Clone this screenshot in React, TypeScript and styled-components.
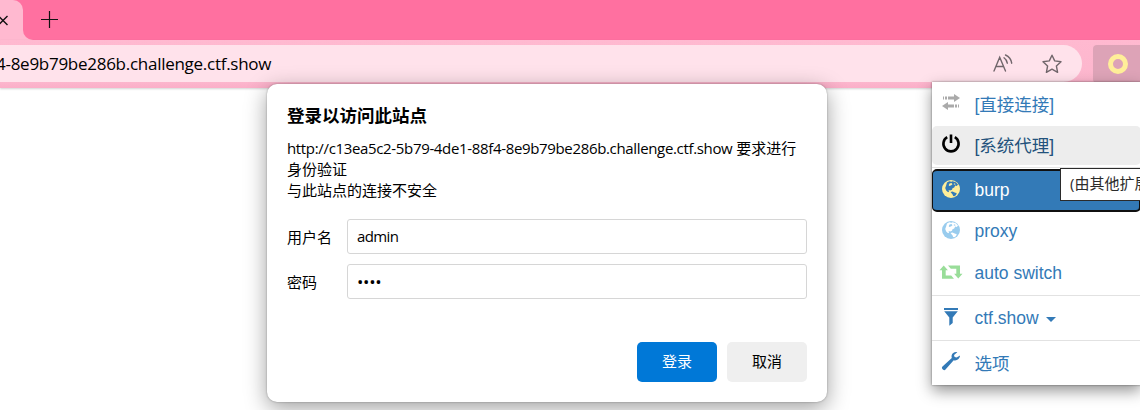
import React from 'react';
import styled, { createGlobalStyle, css } from 'styled-components';

const GlobalStyle = createGlobalStyle`
  *, *::before, *::after { box-sizing: border-box; }
  html, body { margin: 0; padding: 0; overflow: hidden; background: #fff; }
`;

const uiFont = `"Open Sans", "Noto Sans CJK SC", sans-serif`;
const menuFont = `"Liberation Sans", "Noto Sans CJK SC", sans-serif`;

const Browser = styled.div`
  position: relative;
  width: 1140px;
  height: 410px;
  overflow: hidden;
  display: flex;
  flex-direction: column;
  background: #fff;
  font-family: ${uiFont};
  color: #000;
`;

const TabStrip = styled.div`
  height: 40px;
  display: flex;
  background: #ffb9d0;
`;

const ActiveTab = styled.div`
  width: 23px;
  background: #ff70a0;
  display: flex;

  &::before {
    content: '';
    flex: 1;
    background: #ffb9d0;
    border-top-right-radius: 10px;
  }
`;

const TabClose = styled.svg`
  position: absolute;
  left: -3px;
  top: 14px;
`;

const StripRest = styled.div`
  flex: 1;
  background: #ff70a0;
  border-bottom-left-radius: 10px;
  padding: 10px 0 0 17px;
`;

const Toolbar = styled.div`
  height: 48px;
  display: flex;
  align-items: flex-start;
  padding-top: 5px;
  background: linear-gradient(#ffb9d0 0, #fcb6cd 42px, #fbaec8 48px);
  box-shadow: 0 1px 2px rgba(0, 0, 0, 0.18);
`;

const AddressBar = styled.div`
  flex: none;
  width: 1082px;
  height: 37px;
  display: flex;
  align-items: center;
  padding-right: 19px;
  background: #ffe2eb;
  border-radius: 0 19px 19px 0;
`;

const Address = styled.div`
  flex: 1;
  margin-left: -4px;
  font-size: 17px;
  line-height: 24px;
  letter-spacing: -0.27px;
  white-space: nowrap;
`;

const BarIcon = styled.svg`
  display: block;
  margin-left: 27px;
`;

const ExtensionButton = styled.div`
  flex: none;
  width: 60px;
  height: 38px;
  margin-left: 11px;
  padding: 9px 0 0 15px;
  border-radius: 4px;
  background: #dda3b7;
`;

const Ring = styled.div`
  width: 20px;
  height: 20px;
  border: 5px solid #fe9;
  border-radius: 50%;
`;

const Dialog = styled.section`
  position: absolute;
  left: 267px;
  top: 84px;
  width: 560px;
  height: 318px;
  padding: 20px;
  display: flex;
  flex-direction: column;
  background: #fff;
  border-radius: 10px;
  box-shadow: 0 0 2px rgba(0, 0, 0, 0.35), 0 6px 22px rgba(0, 0, 0, 0.38);
  font-size: 15px;
`;

const DialogTitle = styled.h1`
  margin: 0 0 11px;
  font-size: 17.5px;
  line-height: 23px;
  font-weight: 700;
`;

const Message = styled.p`
  margin: 0;
  line-height: 21px;
`;

const Origin = styled.span`
  letter-spacing: -0.34px;
`;

const Fields = styled.div`
  display: flex;
  flex-direction: column;
  gap: 10px;
  margin-top: 18px;
`;

const Field = styled.div`
  display: flex;
  align-items: center;
  height: 35px;
`;

const FieldLabel = styled.div`
  width: 60px;
`;

const FieldBox = styled.div<{ $password?: boolean }>`
  flex: 1;
  height: 35px;
  padding-left: 9px;
  border: 1px solid #d6d6d6;
  border-radius: 3px;
  line-height: 33px;
  font-size: ${(p) => (p.$password ? '17px' : '15px')};
  letter-spacing: ${(p) => (p.$password ? '-0.3px' : '-0.6px')};
`;

const Actions = styled.div`
  display: flex;
  justify-content: flex-end;
  gap: 10px;
  margin-top: auto;
`;

const DialogButton = styled.button<{ $primary?: boolean }>`
  width: 80px;
  height: 40px;
  padding: 0 0 3px;
  border: 0;
  border-radius: 5px;
  font: 15px ${uiFont};
  background: ${(p) => (p.$primary ? '#0078d7' : '#efefef')};
  color: ${(p) => (p.$primary ? '#fff' : '#000')};
`;

const Menu = styled.nav`
  position: absolute;
  left: 932px;
  top: 82px;
  width: 209px;
  height: 303px;
  display: flex;
  flex-direction: column;
  background: #fff;
  box-shadow: 0 0 2px rgba(0, 0, 0, 0.45), 0 6px 14px rgba(0, 0, 0, 0.42);
  font-family: ${menuFont};
`;

const MenuItem = styled.div<{ $state?: 'hover' | 'active'; $height: number; $lift?: number }>`
  flex: none;
  height: ${(p) => p.$height}px;
  display: flex;
  align-items: center;
  padding-left: 7px;
  padding-bottom: ${(p) => p.$lift ?? 0}px;
  border-radius: 5px;
  color: #337ab7;
  font-size: 17.5px;
  ${(p) => p.$state === 'hover' && css`background: #ededed; color: #23527c;`}
  ${(p) =>
    p.$state === 'active' &&
    css`
      background: #337ab7;
      color: #fff;
      border: 2px solid #101010;
      border-left-width: 1px;
      padding-left: 6px;
    `}
`;

const MenuIcon = styled.svg`
  flex: none;
  width: 24px;
  height: 20px;
  margin-right: 11.5px;
  margin-top: -3px;
`;

const Divider = styled.div<{ $top?: number; $bottom?: number }>`
  flex: none;
  height: 1px;
  margin: ${(p) => p.$top ?? 0}px 0 ${(p) => p.$bottom ?? 0}px;
  background: #e2e2e2;
`;

const Caret = styled.span`
  margin: 2px 0 0 7px;
  border: 5px solid transparent;
  border-top-color: currentColor;
  border-bottom: 0;
`;

const Tooltip = styled.div`
  position: absolute;
  left: 1060px;
  top: 168px;
  width: 120px;
  height: 33px;
  padding-left: 9px;
  border: 1px solid #2b2b2b;
  background: #fff;
  color: #2b2b2b;
  font-size: 15px;
  line-height: 28px;
  white-space: nowrap;
`;

const TransferIcon = () => (
  <MenuIcon viewBox="0 0 24 20" fill="#aaa">
    <path d="M4 4.500h1v3H4zM6 4.500h2v3H6zM9 4.500h6V2l6 4-6 4V7.500H9zM20 12.500h-1v3h1zM18 12.500h-2v3h2zM15 12.500H9V10l-6 4 6 4v-2.500h6z" />
  </MenuIcon>
);

const PowerIcon = () => (
  <MenuIcon viewBox="0 0 24 20" fill="none" stroke="#000" strokeWidth="2.6">
    <path d="M8.200 4.200a7.600 7.600 0 1 0 7.600 0M12 1.500v8.500" />
  </MenuIcon>
);

const GlobeIcon = ({ color, land }: { color: string; land: string }) => (
  <MenuIcon viewBox="0 0 24 20">
    <circle cx="12" cy="10" r="9" fill={color} />
    <path
      d="M8 3.500l2.200-1.300 2.300.6 1-.6 3.300 1.100 2.200 2.200-1.200 1.500-1.600-.4-1 1.800-1.700.8-.5 1.500-1.800.8-1.700-.4.6 1.500-1 .6-1.900-1.700-1-2.600 1-2.700zM11.500 13l2-.5 2.700 1.300 1.500.2-.6 2-1.700 1.200-1.300-.2-.5-1.600z"
      fill={land}
    />
    <path d="M10.500 4.500l2-.4 1 1.200-1.200 1-1.800.7-.8-.8zM15 4.200l1.700.7-.8.8-1.200-.4z" fill={color} />
  </MenuIcon>
);

const RetweetIcon = () => (
  <MenuIcon viewBox="0 0 24 20" fill="#9d9">
    <path d="M4.700 3.500l4.200 4.800H6.700v5.200h5.500l2.800 3.200H3V8.300H.5zM9 3.500h12v8.200h2.500l-4.200 4.800-4.200-4.800h2.200V6.700h-5.500z" />
  </MenuIcon>
);

const FilterIcon = () => (
  <MenuIcon viewBox="0 0 24 20" fill="#337ab7">
    <path d="M5 1h14v2H5zM5.200 4.200h13.600L13.700 10.500v5.500l-3.400 2.800v-8.300z" />
  </MenuIcon>
);

const WrenchIcon = () => (
  <MenuIcon viewBox="0 0 24 20" fill="#337ab7">
    <path d="M18.300 1.200c-2.500-.7-5.200.8-5.700 3.400-.2.900 0 1.700.2 2.500L3.500 15.500c-.7.7-.8 1.700-.1 2.400l.8.8c.7.7 1.700.6 2.300-.1l8.200-9.400c2.700.9 5.600-.8 6.200-3.600l.1-1.200-3.400 2.100-2-.6-.6-2z" />
  </MenuIcon>
);

export default function App() {
  return (
    <Browser>
      <GlobalStyle />
      <TabStrip>
        <ActiveTab />
        <TabClose width="12" height="12" stroke="#111" strokeWidth="1.4">
          <path d="M1.500 2l9 9M10.500 2l-9 9" />
        </TabClose>
        <StripRest>
          <svg width="20" height="20" stroke="#111" strokeWidth="1.2">
            <path d="M1 9.500h17M9.500 1v17" />
          </svg>
        </StripRest>
      </TabStrip>

      <Toolbar>
        <AddressBar>
          <Address>4-8e9b79be286b.challenge.ctf.show</Address>
          <BarIcon width="22" height="22" fill="none" stroke="#71666b" strokeWidth="1.4" strokeLinecap="round">
            <path d="M2 18L7.700 4.200 13.500 18M4 13.500h7.500M12 4.800a8 8 0 0 1 3.300 5.400M13.500 2a10.500 10.500 0 0 1 6.200 8.200" />
          </BarIcon>
          <BarIcon width="22" height="22" fill="none" stroke="#71666b" strokeWidth="1.4" strokeLinejoin="round">
            <path d="M11 2.200l2.700 5.700 6.300.8-4.600 4.300 1.200 6.300-5.600-3.100-5.600 3.100 1.200-6.300L2 8.700l6.300-.8z" />
          </BarIcon>
        </AddressBar>
        <ExtensionButton>
          <Ring />
        </ExtensionButton>
      </Toolbar>

      <Dialog>
        <DialogTitle>登录以访问此站点</DialogTitle>
        <Message>
          <Origin>http://c13ea5c2-5b79-4de1-88f4-8e9b79be286b.challenge.ctf.show</Origin> 要求进行
          <br />
          身份验证
        </Message>
        <Message>与此站点的连接不安全</Message>
        <Fields>
          <Field>
            <FieldLabel>用户名</FieldLabel>
            <FieldBox>admin</FieldBox>
          </Field>
          <Field>
            <FieldLabel>密码</FieldLabel>
            <FieldBox $password>••••</FieldBox>
          </Field>
        </Fields>
        <Actions>
          <DialogButton $primary>登录</DialogButton>
          <DialogButton>取消</DialogButton>
        </Actions>
      </Dialog>

      <Menu>
        <MenuItem $height={44} $lift={2}>
          <TransferIcon />
          [直接连接]
        </MenuItem>
        <MenuItem $height={39} $lift={3} $state="hover">
          <PowerIcon />
          [系统代理]
        </MenuItem>
        <Divider $top={2} $bottom={1} />
        <MenuItem $height={43} $lift={1} $state="active">
          <GlobeIcon color="#fe9" land="#337ab7" />
          burp
        </MenuItem>
        <MenuItem $height={41} $lift={2}>
          <GlobeIcon color="#9ce" land="#fff" />
          proxy
        </MenuItem>
        <MenuItem $height={41}>
          <RetweetIcon />
          auto switch
        </MenuItem>
        <Divider $top={1} />
        <MenuItem $height={44}>
          <FilterIcon />
          ctf.show
          <Caret />
        </MenuItem>
        <Divider />
        <MenuItem $height={44} $lift={2}>
          <WrenchIcon />
          选项
        </MenuItem>
      </Menu>
      <Tooltip>(由其他扩展控制)</Tooltip>
    </Browser>
  );
}
